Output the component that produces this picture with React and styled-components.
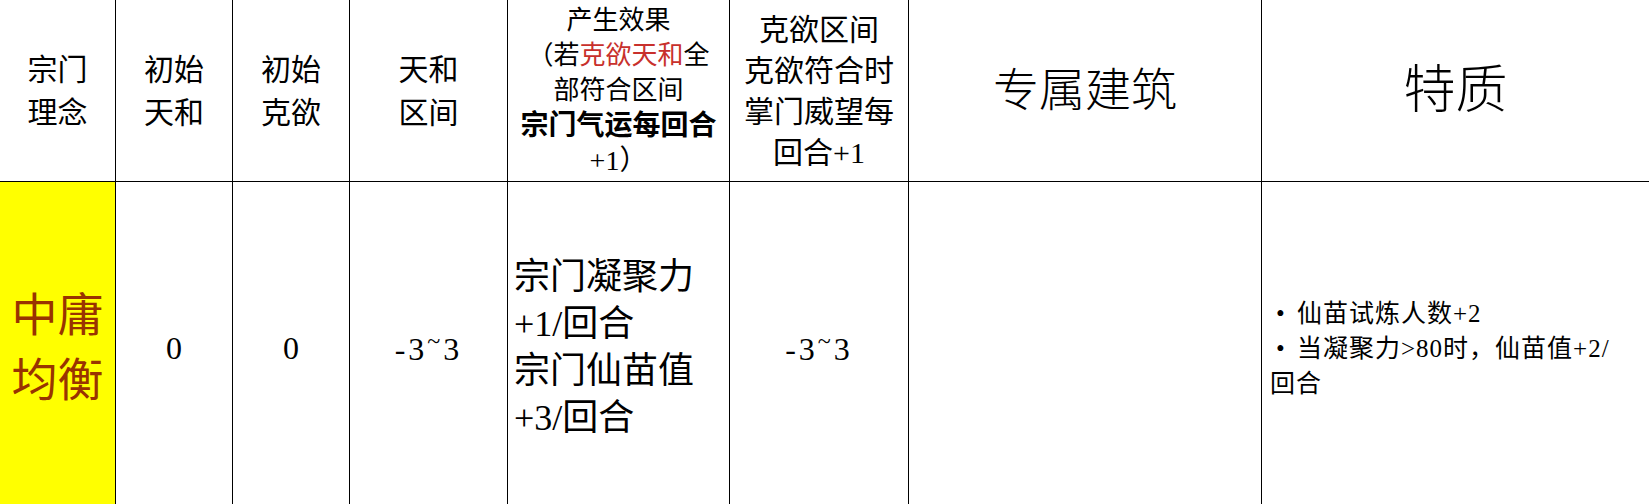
import React from "react";
import styled, { createGlobalStyle } from "styled-components";

const GlobalStyle = createGlobalStyle`
  html, body {
    margin: 0;
    padding: 0;
    background: #ffffff;
    overflow: hidden;
  }
  body {
    font-family: "Liberation Serif", "Noto Sans CJK SC", serif;
    color: #000000;
  }
`;

// 列宽按截图量出来的
const COLS = [116, 117, 117, 158, 222, 179, 353, 387];

const Range = () => (
  <RangeText>
    -3<Tilde>~</Tilde>3
  </RangeText>
);

const App = () => {
  return (
    <>
      <GlobalStyle />
      <Sheet>
        <HeadCell $size={30} $lh={43}>
          宗门
          <br />
          理念
        </HeadCell>
        <HeadCell $size={30} $lh={43}>
          初始
          <br />
          天和
        </HeadCell>
        <HeadCell $size={30} $lh={43}>
          初始
          <br />
          克欲
        </HeadCell>
        <HeadCell $size={30} $lh={43}>
          天和
          <br />
          区间
        </HeadCell>
        <HeadCell $size={26} $lh={35}>
          <Line>产生效果</Line>
          <Line>
            （若<Red>克欲天和</Red>全
          </Line>
          <Line>部符合区间</Line>
          <Line $big $bold>
            宗门气运每回合
          </Line>
          <Line $big>+1）</Line>
        </HeadCell>
        <HeadCell $size={30} $lh={41}>
          克欲区间
          <br />
          克欲符合时
          <br />
          掌门威望每
          <br />
          回合+1
        </HeadCell>
        <HeadCell $size={46} $lh={60} $thin>
          专属建筑
        </HeadCell>
        <HeadCell $size={52} $lh={60} $thin $last>
          特质
        </HeadCell>

        <NameCell>
          中庸
          <br />
          均衡
        </NameCell>
        <ValueCell>0</ValueCell>
        <ValueCell>0</ValueCell>
        <ValueCell>
          <Range />
        </ValueCell>
        <EffectCell>
          宗门凝聚力
          <br />
          +1/回合
          <br />
          宗门仙苗值
          <br />
          +3/回合
        </EffectCell>
        <ValueCell>
          <Range />
        </ValueCell>
        <ValueCell />
        <NoteCell $last>
          <NoteLine>
            <Bullet>•</Bullet>仙苗试炼人数+2
          </NoteLine>
          <NoteLine>
            <Bullet>•</Bullet>当凝聚力&gt;80时，仙苗值+2/
          </NoteLine>
          <NoteLine>回合</NoteLine>
        </NoteCell>
      </Sheet>
    </>
  );
};

const Sheet = styled.div`
  display: grid;
  grid-template-columns: ${COLS.map((w) => `${w}px`).join(" ")};
  grid-template-rows: 182px 332px;
  width: 1649px;
`;

const Cell = styled.div`
  box-sizing: border-box;
  border-right: ${(p) => (p.$last ? "none" : "1px solid #000")};
  display: flex;
  flex-direction: column;
  justify-content: center;
  overflow: hidden;
`;

const HeadCell = styled(Cell)`
  border-bottom: 1px solid #000;
  align-items: center;
  text-align: center;
  font-size: ${(p) => p.$size}px;
  line-height: ${(p) => p.$lh}px;
  font-weight: ${(p) => (p.$thin ? 300 : 400)};
  padding: 0 4px;
`;

const Line = styled.div`
  white-space: nowrap;
  font-size: ${(p) => (p.$big ? "28px" : "inherit")};
  font-weight: ${(p) => (p.$bold ? 700 : 400)};
`;

const Red = styled.span`
  color: #c8302c;
`;

const NameCell = styled(Cell)`
  background: #ffff00;
  align-items: center;
  text-align: center;
  font-size: 46px;
  line-height: 65px;
  color: #993300;
`;

const ValueCell = styled(Cell)`
  align-items: center;
  text-align: center;
  font-size: 32px;
`;

const RangeText = styled.span`
  letter-spacing: 3px;
  white-space: nowrap;
`;

const Tilde = styled.span`
  display: inline-block;
  vertical-align: 0.45em;
  font-size: 24px;
`;

const EffectCell = styled(Cell)`
  padding-left: 6px;
  font-size: 36px;
  line-height: 47px;
  white-space: nowrap;
`;

const NoteCell = styled(Cell)`
  padding-left: 8px;
  font-size: 25px;
  line-height: 35px;
  letter-spacing: 1px;
`;

const NoteLine = styled.div`
  white-space: nowrap;
`;

const Bullet = styled.span`
  display: inline-block;
  width: 21px;
  margin-right: 6px;
  text-align: center;
  letter-spacing: 0;
`;

export default App;
